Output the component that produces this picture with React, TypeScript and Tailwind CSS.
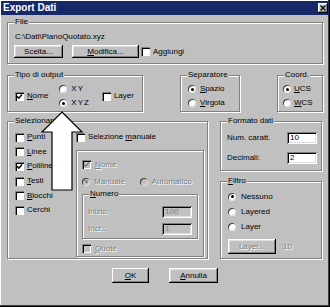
import React from 'react';

const raised =
  'shadow-[inset_-1px_-1px_0_#000,inset_1px_1px_0_#fff,inset_-2px_-2px_0_#808080,inset_2px_2px_0_#dfdfdf]';
const sunken =
  'shadow-[inset_1px_1px_0_#808080,inset_-1px_-1px_0_#fff,inset_2px_2px_0_#000,inset_-2px_-2px_0_#dfdfdf]';
const dim = 'text-[#808080] [text-shadow:1px_1px_0_#fff]';

type GroupProps = { label: React.ReactNode; className?: string; children?: React.ReactNode };

const Group: React.FC<GroupProps> = ({ label, className = '', children }) => (
  <div className={`relative border border-[#808080] shadow-[1px_1px_0_#fff,inset_1px_1px_0_#fff] ${className}`}>
    <span className="absolute left-[6px] top-[-6px] bg-[#c0c0c0] px-[1px] leading-[10px]">{label}</span>
    {children}
  </div>
);

const Check: React.FC<{ checked?: boolean; disabled?: boolean }> = ({ checked, disabled }) => (
  <span
    className={`flex h-[9px] w-[9px] shrink-0 items-center justify-center shadow-[inset_1px_1px_0_#808080,inset_2px_2px_0_#000,inset_-1px_-1px_0_#fff] ${
      disabled ? 'bg-[#c0c0c0]' : 'bg-white'
    }`}
  >
    {checked && (
      <svg width="9" height="9" viewBox="0 0 9 9">
        <polyline
          points="2,4.2 3.8,6.2 7,2.5"
          fill="none"
          stroke={disabled ? '#808080' : '#000'}
          strokeWidth="1.4"
        />
      </svg>
    )}
  </span>
);

const Radio: React.FC<{ checked?: boolean; disabled?: boolean }> = ({ checked, disabled }) => (
  <span
    className={`flex h-[8px] w-[8px] shrink-0 items-center justify-center rounded-full shadow-[inset_1px_1px_0_#404040,inset_-1px_-1px_0_#dfdfdf] ${
      disabled ? 'bg-[#c0c0c0]' : 'bg-white'
    }`}
  >
    {checked && <span className={`h-[3px] w-[3px] rounded-full ${disabled ? 'bg-[#808080]' : 'bg-black'}`} />}
  </span>
);

const Btn: React.FC<{ className?: string; disabled?: boolean; children: React.ReactNode }> = ({
  className = '',
  disabled,
  children,
}) => (
  <div className={`flex items-center justify-center bg-[#c0c0c0] ${raised} ${className} ${disabled ? dim : ''}`}>
    {children}
  </div>
);

const Field: React.FC<{ value: string; disabled?: boolean }> = ({ value, disabled }) => (
  <div
    className={`flex h-[12px] w-[30px] items-center pl-[3px] ${sunken} ${
      disabled ? 'bg-[#c0c0c0] text-[#808080]' : 'bg-white'
    }`}
  >
    {value}
  </div>
);

const App: React.FC = () => {
  const oggetti: [string, string, boolean][] = [
    ['P', 'unti', false],
    ['L', 'inee', false],
    ['P', 'olilinee', true],
    ['T', 'esti', false],
    ['B', 'locchi', false],
    ['', 'Cerchi', false],
  ];

  return (
    <div className="relative h-[307px] w-[330px] overflow-hidden bg-[#c0c0c0] p-[1px] font-['Liberation_Sans',Arial,sans-serif] text-[8px] leading-[10px] text-black shadow-[inset_-1px_-1px_0_#000,inset_-2px_-2px_0_#404040,inset_1px_1px_0_#fff]">
      {/* title bar */}
      <div className="flex h-[14px] items-center justify-between bg-[#172869] pl-[2px] pr-[1px]">
        <span className="text-[10px] font-bold leading-[14px] text-white">Export Dati</span>
        <div className={`flex h-[10px] w-[10px] items-center justify-center bg-[#c0c0c0] ${raised}`}>
          <svg width="6" height="6" viewBox="0 0 6 6">
            <path d="M0.5 0.5 L5.5 5.5 M5.5 0.5 L0.5 5.5" stroke="#000" strokeWidth="1.2" />
          </svg>
        </div>
      </div>

      <div className="px-[6px]">
        {/* File */}
        <Group label="File" className="mt-[7px] h-[42px] w-[316px]">
          <div className="pl-[7px] pt-[9px]">C:\Dati\PianoQuotato.xyz</div>
          <div className="mt-[3px] flex items-center pl-[6px]">
            <Btn className="h-[13px] w-[49px]">Scelta...</Btn>
            <Btn className="ml-[9px] h-[13px] w-[67px]">
              <span>
                <u>M</u>odifica...
              </span>
            </Btn>
            <div className="ml-[2px]">
              <Check />
            </div>
            <span className="ml-[3px]">Aggiungi</span>
          </div>
        </Group>

        {/* Tipo / Separatore / Coord */}
        <div className="mt-[11px] flex">
          <Group label="Tipo di output" className="h-[37px] w-[136px]">
            <div className="flex h-full items-center pl-[7px] pt-[5px]">
              <Check checked />
              <span className="ml-[3px]">
                <u>N</u>ome
              </span>
              <div className="ml-[11px] flex flex-col gap-[4px]">
                <div className="flex items-center">
                  <Radio />
                  <span className="ml-[4px] tracking-[1px]">XY</span>
                </div>
                <div className="flex items-center">
                  <Radio checked />
                  <span className="ml-[4px] tracking-[1px]">XYZ</span>
                </div>
              </div>
              <div className="ml-[12px]">
                <Check />
              </div>
              <span className="ml-[3px]">Layer</span>
            </div>
          </Group>

          <Group label="Separatore" className="ml-[37px] h-[37px] w-[60px]">
            <div className="flex h-full flex-col justify-center gap-[4px] pl-[7px] pt-[5px]">
              <div className="flex items-center">
                <Radio checked />
                <span className="ml-[4px]">
                  <u>S</u>pazio
                </span>
              </div>
              <div className="flex items-center">
                <Radio />
                <span className="ml-[4px]">
                  <u>V</u>irgola
                </span>
              </div>
            </div>
          </Group>

          <Group label="Coord." className="ml-[37px] h-[37px] w-[46px]">
            <div className="flex h-full flex-col justify-center gap-[4px] pl-[5px] pt-[5px]">
              <div className="flex items-center">
                <Radio checked />
                <span className="ml-[3px]">
                  <u>U</u>CS
                </span>
              </div>
              <div className="flex items-center">
                <Radio />
                <span className="ml-[3px]">
                  <u>W</u>CS
                </span>
              </div>
            </div>
          </Group>
        </div>

        {/* Selezionare + right column */}
        <div className="mt-[9px] flex">
          <Group label="Selezionare" className="h-[138px] w-[201px]">
            <div className="flex pl-[7px] pt-[8px]">
              <div className="flex w-[61px] flex-col">
                {oggetti.map(([u, rest, checked]) => (
                  <div key={u + rest} className="flex h-[14.6px] items-center">
                    <Check checked={checked} />
                    <span className="ml-[3px]">
                      {u && <u>{u}</u>}
                      {rest}
                    </span>
                  </div>
                ))}
              </div>

              <div className="flex w-[128px] flex-col">
                <div className="flex h-[14.6px] items-center">
                  <Check />
                  <span className="ml-[3px]">
                    Selezione <u>m</u>anuale
                  </span>
                </div>

                <div className="mt-[5px] flex h-[107px] flex-col border border-[#808080] pl-[5px] pt-[9px] shadow-[1px_1px_0_#fff,inset_1px_1px_0_#fff]">
                  <div className="flex h-[10px] items-center">
                    <Check checked disabled />
                    <span className={`ml-[4px] ${dim}`}>
                      <u>N</u>ome
                    </span>
                  </div>
                  <div className="mt-[7px] flex h-[10px] items-center">
                    <Radio checked disabled />
                    <span className={`ml-[4px] ${dim}`}>Manuale</span>
                    <span className="ml-[15px]">
                      <Radio disabled />
                    </span>
                    <span className={`ml-[4px] ${dim}`}>Automatico</span>
                  </div>

                  <Group
                    label={
                      <span>
                        <u>N</u>umero
                      </span>
                    }
                    className="mt-[7px] h-[45px] w-[116px]"
                  >
                    <div className="flex flex-col gap-[5px] pl-[5px] pr-[5px] pt-[11px]">
                      <div className="flex items-center justify-between">
                        <span className={dim}>Inizio:</span>
                        <Field value="100" disabled />
                      </div>
                      <div className="flex items-center justify-between">
                        <span className={dim}>Incr.:</span>
                        <Field value="1" disabled />
                      </div>
                    </div>
                  </Group>

                  <div className="mt-[5px] flex h-[10px] items-center">
                    <Check disabled />
                    <span className={`ml-[4px] ${dim}`}>
                      <u>Q</u>uote
                    </span>
                  </div>
                </div>
              </div>
            </div>
          </Group>

          <div className="ml-[12px] flex w-[102px] flex-col">
            <Group label="Formato dati" className="h-[50px]">
              <div className="flex flex-col gap-[8px] pl-[6px] pr-[4px] pt-[10px]">
                <div className="flex items-center justify-between">
                  <span>Num. caratt.</span>
                  <Field value="10" />
                </div>
                <div className="flex items-center justify-between">
                  <span>Decimali:</span>
                  <Field value="2" />
                </div>
              </div>
            </Group>

            <Group
              label={
                <span>
                  <u>F</u>iltro
                </span>
              }
              className="mt-[10px] h-[78px]"
            >
              <div className="flex flex-col pl-[7px] pt-[7px]">
                {['Nessuno', 'Layered', 'Layer'].map((t, i) => (
                  <div key={t} className="flex h-[15px] items-center">
                    <Radio checked={i === 0} />
                    <span className="ml-[5px]">{t}</span>
                  </div>
                ))}
                <div className="mt-[5px] flex items-center">
                  <Btn disabled className="h-[15px] w-[48px]">
                    Layer...
                  </Btn>
                  <span className={`ml-[7px] ${dim}`}>10</span>
                </div>
              </div>
            </Group>
          </div>
        </div>

        {/* OK / Annulla */}
        <div className="mt-[9px] flex pl-[105px]">
          <Btn className="h-[15px] w-[37px] shadow-[inset_-1px_-1px_0_#000,inset_1px_1px_0_#fff,inset_-2px_-2px_0_#808080]">
            <span>
              <u>O</u>K
            </span>
          </Btn>
          <Btn className="ml-[20px] h-[15px] w-[49px]">
            <span>
              <u>A</u>nnulla
            </span>
          </Btn>
        </div>
      </div>

      {/* callout arrow pointing at XYZ */}
      <svg className="absolute left-0 top-0" width="330" height="307" viewBox="0 0 330 307">
        <polygon
          points="62,112 82,132 72,132 72,190 52,190 52,132 42,132"
          fill="#fff"
          stroke="#000"
          strokeWidth="1.2"
        />
      </svg>
    </div>
  );
};

export default App;
